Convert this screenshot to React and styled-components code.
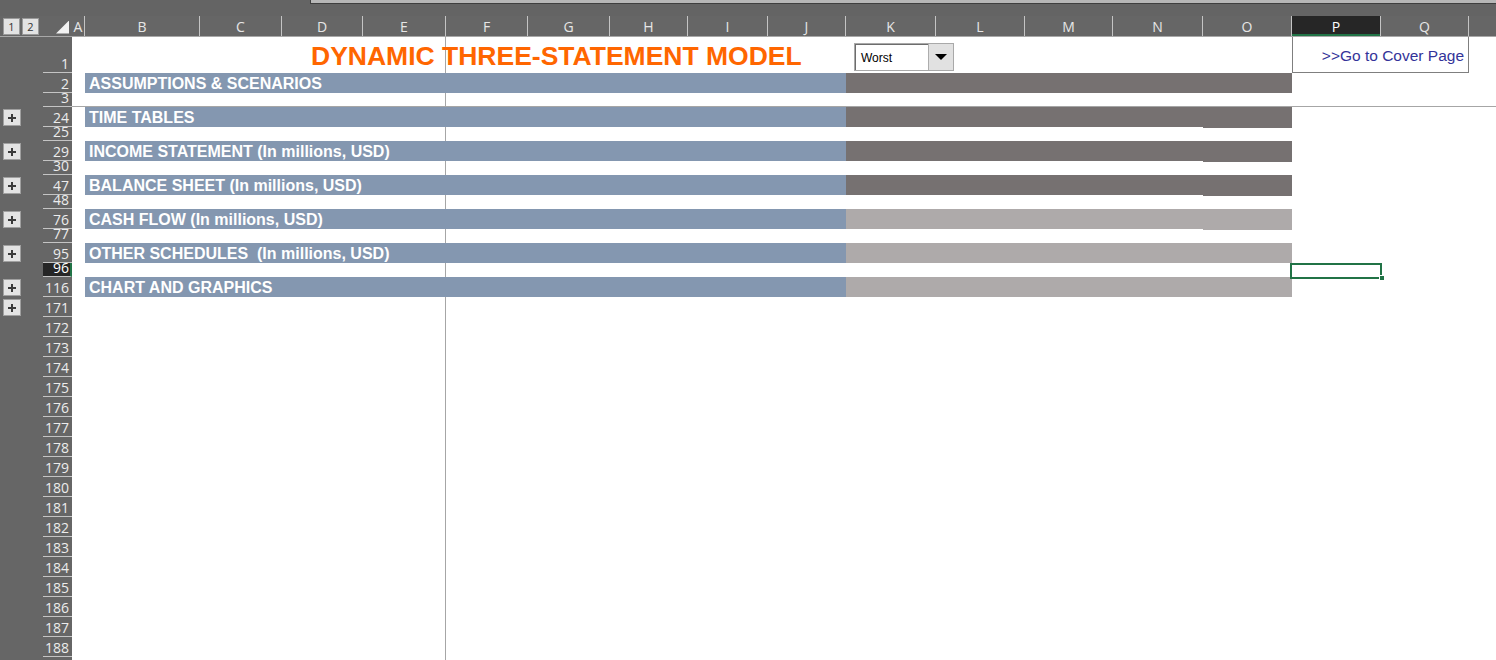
import React from 'react';
import styled, { createGlobalStyle, css } from 'styled-components';

const GlobalStyle = createGlobalStyle`
  html, body {
    margin: 0;
    padding: 0;
    width: 1496px;
    height: 660px;
    overflow: hidden;
    background: #666666;
  }
  * { box-sizing: border-box; }
`;

const COLS = [
  ['A', 13], ['B', 115], ['C', 82], ['D', 81], ['E', 83], ['F', 82], ['G', 82],
  ['H', 78], ['I', 80], ['J', 78], ['K', 90], ['L', 89], ['M', 88], ['N', 90],
  ['O', 89], ['P', 89], ['Q', 88], ['R', 90],
];

const TEMPLATE = `72px ${COLS.map((c) => c[1] + 'px').join(' ')} 1fr`;

const HEAD_FONT = `"Open Sans", "DejaVu Sans", sans-serif`;
const CELL_FONT = `"Liberation Sans", Arial, sans-serif`;
const GREEN = '#217346';

const Window = styled.div`
  width: 1496px;
  height: 660px;
  display: flex;
  flex-direction: column;
  overflow: hidden;
  background: #666666;
`;

const TopStrip = styled.div`
  height: 16px;
  flex: none;
  background: #646464;
  padding-left: 310px;
`;

const FormulaEdge = styled.div`
  height: 4px;
  background: #b7b7b7;
  border-left: 1px solid #3f3f3f;
  border-bottom: 1px solid #3f3f3f;
`;

const HeaderRow = styled.div`
  flex: none;
  display: grid;
  grid-template-columns: ${TEMPLATE};
  height: 21px;
  border-bottom: 1px solid #a8a8a8;
  background: #666666;
`;

const Corner = styled.div`
  display: flex;
  align-items: center;
  gap: 2px;
  padding-left: 3px;
`;

const LevelBtn = styled.div`
  width: 17px;
  height: 17px;
  display: flex;
  align-items: center;
  justify-content: center;
  background: #e3e3e3;
  border: 1px solid #9a9a9a;
  color: #333;
  font: 11px ${HEAD_FONT};
`;

const SelectAll = styled.div`
  width: 13px;
  height: 13px;
  margin: 2px 3px 0 auto;
  background: #f2f2f2;
  clip-path: polygon(100% 0, 100% 100%, 0 100%);
`;

const ColHead = styled.div`
  display: flex;
  align-items: center;
  justify-content: center;
  border-right: 1px solid #c4c4c4;
  color: #e6e6e6;
  font: 14px ${HEAD_FONT};
  padding-top: 1px;
  ${(p) =>
    p.$active &&
    css`
      background: #262626;
      color: #ffffff;
      box-shadow: inset 0 -2px 0 ${GREEN};
    `}
`;

const Body = styled.div`
  flex: 1;
  background:
    linear-gradient(to right, transparent 445px, #a6a6a6 445px, #a6a6a6 446px, transparent 446px),
    #ffffff;
`;

const SheetRow = styled.div`
  display: grid;
  grid-template-columns: ${TEMPLATE};
  height: ${(p) => p.$h}px;
  ${(p) =>
    p.$freeze &&
    css`
      background: linear-gradient(to top, #a6a6a6 1px, transparent 1px);
    `}
`;

const RowHead = styled.div`
  grid-column: 1;
  display: flex;
  background: #666666;
  overflow: hidden;
`;

const Outline = styled.div`
  width: 43px;
  flex: none;
  padding: 2px 0 0 3px;
`;

const PlusBtn = styled.div`
  position: relative;
  width: 18px;
  height: 17px;
  background: #e3e3e3;
  border: 1px solid #a0a0a0;

  &::before,
  &::after {
    content: '';
    position: absolute;
    background: #3a3a3a;
  }
  &::before {
    left: 4px;
    top: 7px;
    width: 8px;
    height: 2px;
  }
  &::after {
    left: 7px;
    top: 4px;
    width: 2px;
    height: 8px;
  }
`;

const RowNum = styled.div`
  flex: 1;
  display: flex;
  align-items: flex-end;
  justify-content: flex-end;
  padding-right: 3px;
  border-bottom: 1px solid #c4c4c4;
  color: #ececec;
  font: 14px/17px ${HEAD_FONT};
  overflow: hidden;
  ${(p) =>
    p.$selected &&
    css`
      background: #262626;
      color: #ffffff;
      border-right: 2px solid ${GREEN};
      padding-right: 1px;
    `}
`;

const BlueBand = styled.div`
  grid-column: 3 / 12;
  display: flex;
  align-items: center;
  padding: 1px 0 0 4px;
  background: #8497b0;
  color: #ffffff;
  font: bold 16px/20px ${CELL_FONT};
  white-space: pre;
  overflow: hidden;
`;

const GrayBand = styled.div`
  grid-column: ${(p) => (p.$tail ? '16 / 17' : '12 / 16')};
  align-self: start;
  height: ${(p) => (p.$step ? 'calc(100% + 1px)' : '100%')};
  background: ${(p) => (p.$tone === 'light' ? '#aeaaaa' : '#767171')};
`;

const Title = styled.div`
  grid-column: 5 / 12;
  align-self: end;
  padding: 0 0 2px 29px;
  color: #ff6600;
  font: bold 26.5px/30px ${CELL_FONT};
  white-space: nowrap;
`;

const Dropdown = styled.div`
  grid-column: 12 / 14;
  align-self: start;
  justify-self: start;
  margin: 6px 0 0 8px;
  width: 100px;
  height: 28px;
  display: flex;
  border: 1px solid #a9a9a9;
  background: #ffffff;
`;

const DropValue = styled.div`
  flex: 1;
  display: flex;
  align-items: center;
  padding-left: 5px;
  border-top: 1px solid #6d6d6d;
  border-left: 1px solid #6d6d6d;
  color: #000;
  font: 12px ${CELL_FONT};
`;

const DropButton = styled.div`
  width: 25px;
  display: flex;
  align-items: center;
  justify-content: center;
  background: #e1e1e1;
  border-left: 1px solid #adadad;

  &::after {
    content: '';
    border-left: 6px solid transparent;
    border-right: 6px solid transparent;
    border-top: 6px solid #000;
  }
`;

const CoverLink = styled.div`
  grid-column: 17 / 19;
  display: flex;
  align-items: center;
  justify-content: flex-end;
  padding: 2px 4px 0 0;
  border: 1px solid #7f7f7f;
  border-top: none;
  color: #333399;
  font: 15.5px ${CELL_FONT};
  white-space: nowrap;
`;

const ActiveCell = styled.div`
  grid-column: 17 / 18;
  position: relative;
`;

const SelFrame = styled.div`
  position: absolute;
  top: 0;
  left: -2px;
  right: -1px;
  bottom: -2px;
  border: 2px solid ${GREEN};
`;

const FillHandle = styled.div`
  position: absolute;
  right: -4px;
  bottom: -4px;
  width: 6px;
  height: 6px;
  background: ${GREEN};
  border: 1px solid #ffffff;
`;

const SECTIONS = {
  '2': { label: 'ASSUMPTIONS & SCENARIOS', tone: 'dark' },
  '24': { label: 'TIME TABLES', tone: 'dark', step: true },
  '29': { label: 'INCOME STATEMENT (In millions, USD)', tone: 'dark', step: true },
  '47': { label: 'BALANCE SHEET (In millions, USD)', tone: 'dark', step: true },
  '76': { label: 'CASH FLOW (In millions, USD)', tone: 'light', step: true },
  '95': { label: 'OTHER SCHEDULES  (In millions, USD)', tone: 'light' },
  '116': { label: 'CHART AND GRAPHICS', tone: 'light' },
};

const ROWS = [
  { n: '1', h: 36 },
  { n: '2', h: 20 },
  { n: '3', h: 14, freeze: true },
  { n: '24', h: 20, plus: true },
  { n: '25', h: 14 },
  { n: '29', h: 20, plus: true },
  { n: '30', h: 14 },
  { n: '47', h: 20, plus: true },
  { n: '48', h: 14 },
  { n: '76', h: 20, plus: true },
  { n: '77', h: 14 },
  { n: '95', h: 20, plus: true },
  { n: '96', h: 14, selected: true },
  { n: '116', h: 20, plus: true },
  { n: '171', h: 20, plus: true },
];
for (let i = 172; i <= 190; i++) ROWS.push({ n: String(i), h: 20 });

const Row = ({ row }) => {
  const section = SECTIONS[row.n];
  return (
    <SheetRow $h={row.h} $freeze={row.freeze}>
      <RowHead>
        <Outline>{row.plus && <PlusBtn />}</Outline>
        <RowNum $selected={row.selected}>{row.n}</RowNum>
      </RowHead>

      {row.n === '1' && (
        <>
          <Title>DYNAMIC THREE-STATEMENT MODEL</Title>
          <Dropdown>
            <DropValue>Worst</DropValue>
            <DropButton />
          </Dropdown>
          <CoverLink>&gt;&gt;Go to Cover Page</CoverLink>
        </>
      )}

      {section && (
        <>
          <BlueBand>{section.label}</BlueBand>
          <GrayBand $tone={section.tone} />
          <GrayBand $tone={section.tone} $tail $step={section.step} />
        </>
      )}

      {row.selected && (
        <ActiveCell>
          <SelFrame />
          <FillHandle />
        </ActiveCell>
      )}
    </SheetRow>
  );
};

export default function App() {
  return (
    <>
      <GlobalStyle />
      <Window>
        <TopStrip>
          <FormulaEdge />
        </TopStrip>
        <HeaderRow>
          <Corner>
            <LevelBtn>1</LevelBtn>
            <LevelBtn>2</LevelBtn>
            <SelectAll />
          </Corner>
          {COLS.map(([name]) => (
            <ColHead key={name} $active={name === 'P'}>
              {name}
            </ColHead>
          ))}
        </HeaderRow>
        <Body>
          {ROWS.map((row) => (
            <Row key={row.n} row={row} />
          ))}
        </Body>
      </Window>
    </>
  );
}
